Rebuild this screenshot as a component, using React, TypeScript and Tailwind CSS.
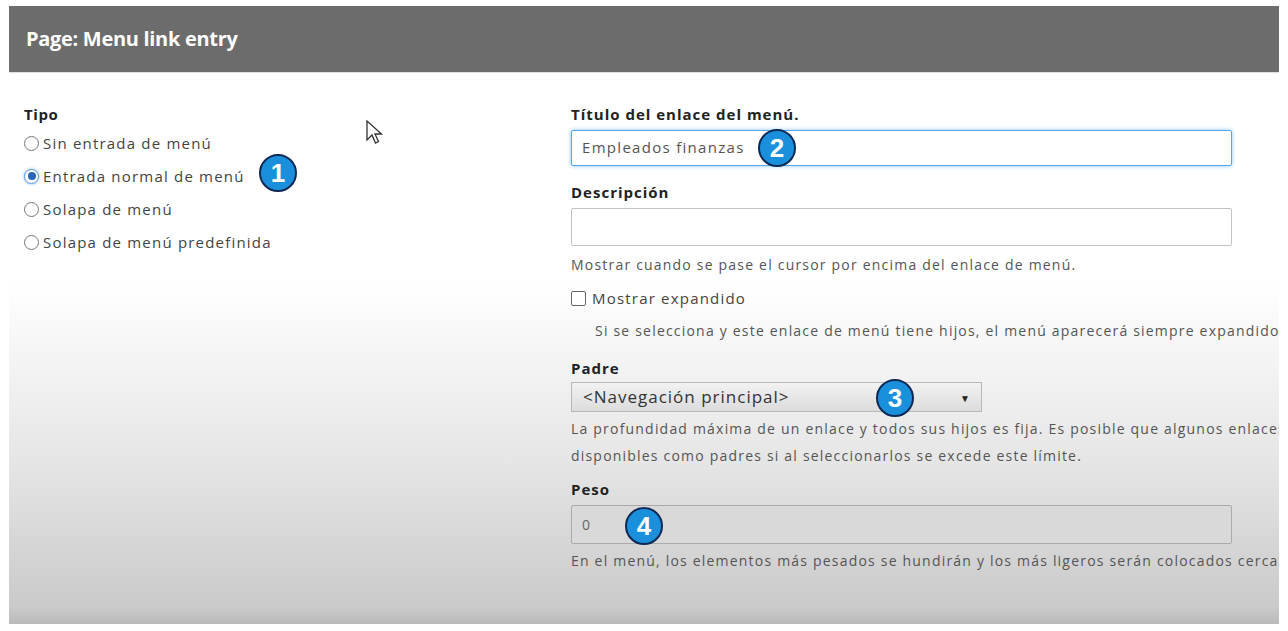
import React from "react";

const Badge = ({ n, className = "" }: { n: string; className?: string }) => (
  <span
    className={
      "absolute flex items-center justify-center w-[38px] h-[38px] rounded-full bg-[#1a8fdc] border-2 border-[#0c2a55] text-white text-[26px] font-bold leading-none tracking-normal " +
      className
    }
    style={{ fontFamily: "'Liberation Sans', Arial, sans-serif" }}
  >
    {n}
  </span>
);

const Radio = ({ checked }: { checked?: boolean }) => (
  <span
    className={
      "inline-flex items-center justify-center w-[15px] h-[15px] rounded-full border mr-[4px] " +
      (checked ? "border-[#5b9fd8] bg-white shadow-[0_0_3px_#7db8ea]" : "border-[#777] bg-white")
    }
  >
    {checked && <span className="w-[8px] h-[8px] rounded-full bg-[#2a66b8]" />}
  </span>
);

const help = "text-[14px] tracking-[1.2px] text-[#555]";

export default function App() {
  return (
    <div
      className="w-[1288px] h-[631px] bg-white pt-[6px] pl-[9px] overflow-hidden"
      style={{ fontFamily: "'Open Sans', 'Noto Sans', sans-serif" }}
    >
      <div className="w-[1270px] h-[618px] overflow-hidden flex flex-col">
        <div className="h-[67px] bg-[#6c6c6c] flex items-center pl-[17px] border-b border-[#e0e0e0]">
          <span className="text-white text-[20px] font-bold tracking-[-0.3px]">Page: Menu link entry</span>
        </div>
        <div className="flex-1 bg-[linear-gradient(to_bottom,#ffffff_0%,#ffffff_38%,#e6e6e6_70%,#cacaca_97%,#b9b9b9_100%)] flex text-[#333] text-[15px]">
          <div className="w-[562px] shrink-0 pl-[15px] pt-[30px] relative">
            <div className="font-bold text-[15px] text-[#222] tracking-[0.6px] mb-[1px]">Tipo</div>
            {[
              ["Sin entrada de menú", false],
              ["Entrada normal de menú", true],
              ["Solapa de menú", false],
              ["Solapa de menú predefinida", false],
            ].map(([t, c], i) => (
              <div key={i} className="flex items-center h-[33px] text-[#444] tracking-[1.2px] relative">
                <Radio checked={c as boolean} />
                <span>{t as string}</span>
                {i === 1 && <Badge n="1" className="left-[235px] top-[-6px]" />}
              </div>
            ))}
            <svg className="absolute left-[357px] top-[47px]" width="18" height="26" viewBox="0 0 18 26">
              <path d="M1 1 L1 20 L6 15 L9.5 23 L12.5 21.5 L9 14 L15.5 14 Z" fill="white" stroke="#333" strokeWidth="1.3" />
            </svg>
          </div>
          <div className="flex-1 pt-[30px] whitespace-nowrap">
            <div className="font-bold text-[#222] tracking-[1px] mb-[4px]">Título del enlace del menú.</div>
            <div className="relative w-[661px] h-[36px] border border-[#5aa6ea] shadow-[0_0_4px_#8cc4f4] rounded-[2px] bg-white flex items-center pl-[10px] text-[#555] text-[15px] tracking-[1.3px]">
              Empleados finanzas
              <Badge n="2" className="left-[186px] top-[-2px]" />
            </div>
            <div className="font-bold text-[#222] tracking-[1px] mt-[15px] mb-[5px]">Descripción</div>
            <div className="w-[661px] h-[38px] border border-[#c4c4c4] rounded-[2px] bg-white" />
            <div className={help + " mt-[8px]"}>Mostrar cuando se pase el cursor por encima del enlace de menú.</div>
            <div className="flex items-center mt-[12px] text-[#444] tracking-[1.2px]">
              <span className="w-[15px] h-[15px] border border-[#666] rounded-[2px] bg-white mr-[6px]" />
              Mostrar expandido
            </div>
            <div className={help + " mt-[10px] pl-[24px]"}>
              Si se selecciona y este enlace de menú tiene hijos, el menú aparecerá siempre expandido.
            </div>
            <div className="font-bold text-[#222] tracking-[1px] mt-[16px] mb-[3px]">Padre</div>
            <div className="relative w-[411px] h-[30px] border border-[#b8b8b8] bg-[linear-gradient(to_bottom,#f2f2f2,#dcdcdc)] flex items-center pl-[11px] text-[#333] text-[17px] tracking-[1px]">
              &lt;Navegación principal&gt;
              <span className="absolute right-[10px] top-[8px] text-[10px] text-[#222]">▼</span>
              <Badge n="3" className="left-[304px] top-[-4px]" />
            </div>
            <div className={help + " mt-[3px] leading-[27px]"}>
              La profundidad máxima de un enlace y todos sus hijos es fija. Es posible que algunos enlaces no estén
              <br />
              disponibles como padres si al seleccionarlos se excede este límite.
            </div>
            <div className="font-bold text-[#222] tracking-[1px] mt-[9px] mb-[4px]">Peso</div>
            <div className="relative w-[661px] h-[39px] border border-[#aaa] rounded-[2px] bg-[#d9d9d9] flex items-center pl-[10px] text-[#666] text-[14px]">
              0
              <Badge n="4" className="left-[53px] top-[1px]" />
            </div>
            <div className={help + " mt-[6px]"}>
              En el menú, los elementos más pesados se hundirán y los más ligeros serán colocados cerca de la parte superior.
            </div>
          </div>
        </div>
      </div>
    </div>
  );
}
